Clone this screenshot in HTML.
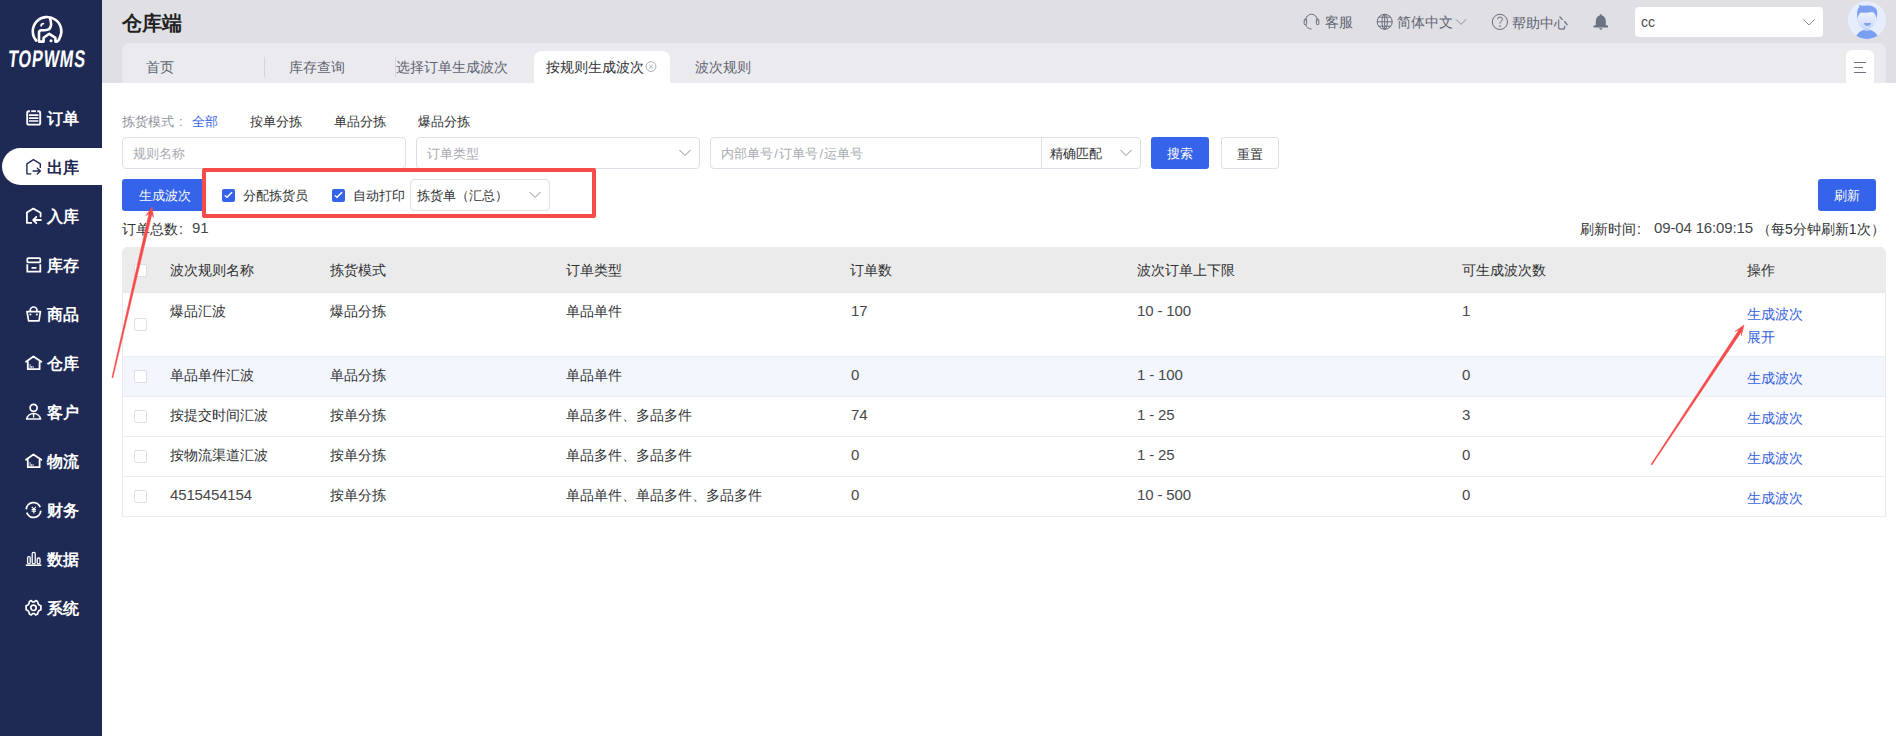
<!DOCTYPE html>
<html><head><meta charset="utf-8">
<style>
*{box-sizing:border-box;margin:0;padding:0}
html,body{width:1896px;height:736px;overflow:hidden;background:#fff;font-family:"Liberation Sans",sans-serif;color:#303133}
.a{position:absolute;white-space:nowrap}
#side{position:absolute;left:0;top:0;width:102px;height:736px;background:#1f2a54}
#hdr{position:absolute;left:102px;top:0;width:1794px;height:83px;background:#dfdfe4}
#tabs{position:absolute;left:122px;top:43px;width:1764px;height:40px;background:#ebeaef;border-radius:8px 8px 0 0}
.mi{position:absolute;left:0;width:102px;height:20px;color:#fff;font-size:16px;font-weight:bold;line-height:20px}
.mi svg{position:absolute;left:22px;top:-2px}
.mi span{position:absolute;left:47px;top:1px}
.t13{font-size:13px;line-height:20px}
.t14{font-size:14px;line-height:20px}
.inp{position:absolute;border:1px solid #dcdfe6;border-radius:4px;background:#fff;height:32px}
.ph{color:#a8abb2}
.btn{position:absolute;background:#3563e9;color:#fff;border-radius:3px;font-size:13px;text-align:center;line-height:34px;height:32px}
.chev{position:absolute}
.cb{position:absolute;width:13px;height:13px;border:1px solid #dcdfe6;border-radius:2px;background:#fff}
.row{position:absolute;left:123px;width:1762px;border-bottom:1px solid #ebeef5}
.num{font-size:15px;letter-spacing:-0.15px;color:#46474a}
.lnk{color:#3763e0}
</style></head><body>

<div id="side">
  <svg class="a" style="left:0;top:0" width="102" height="50" viewBox="0 0 102 50">
    <g fill="none" stroke="#fff" stroke-width="2.6" stroke-linecap="round" stroke-linejoin="round">
      <path d="M36.2 40.6 A14.3 14.3 0 1 1 59.6 38.2 Q58.6 41.4 56.6 41.6 L55.4 41.6 L55.4 37.8 L49.3 33.8 L43.6 37.8 L43.6 41.6 L39 41.6 L39 32.8 Q39 30.2 41.6 30.2 L44.6 30.2 Q51.1 30.2 51.1 24.2 Q51.1 20.4 49.8 17.8"/>
      <path d="M41.2 25.8 Q41.2 23.6 43.4 23.6" stroke-width="1.8"/>
    </g>
    <circle cx="51" cy="40.8" r="1.5" fill="#fff"/>
  </svg>
  <div class="a" style="left:7px;top:47px;font-size:24px;font-weight:bold;color:#fff;line-height:24px;letter-spacing:1.1px;transform:scaleX(0.68) skewX(-9deg);transform-origin:0 24px">TOPWMS</div>

  <div class="mi" style="top:108px"><svg width="24" height="24" viewBox="0 0 24 24"><rect x="5.2" y="5.2" width="13" height="13.4" rx="1.6" fill="none" stroke="currentColor" stroke-width="1.9"/><path d="M7.9 5.2 H15.2" stroke="#1f2a54" stroke-width="2.6"/><path d="M9.2 5.1 H13.9 M7 9.1 H16.4 M7 12.1 H16.4 M7 15 H16.4" stroke="currentColor" stroke-width="1.6"/></svg><span>订单</span></div>
  <div class="a" style="left:2px;top:148px;width:100px;height:37px;background:#fff;border-radius:18.5px 0 0 18.5px"></div>
  <div class="mi" style="top:157px;color:#1f2a54"><svg width="24" height="24" viewBox="0 0 24 24"><path d="M8.8 18.9 H4.9 V8.8 L11.4 4.6 L18.3 8.8 V12.4 M11.1 16 H18.4 M15.3 13.3 L18.4 16 L15.3 18.9" fill="none" stroke="currentColor" stroke-width="1.4" stroke-linecap="round" stroke-linejoin="round"/></svg><span>出库</span></div>
  <div class="mi" style="top:206px"><svg width="24" height="24" viewBox="0 0 24 24"><path d="M9.3 18.9 H4.9 V8.6 L11.4 4.6 L18.6 8.8 V12.5 M18.9 16 H11.3 M14.3 13 L11.2 16 L14.3 19.2" fill="none" stroke="currentColor" stroke-width="1.8" stroke-linecap="round" stroke-linejoin="round"/></svg><span>入库</span></div>
  <div class="mi" style="top:255px"><svg width="24" height="24" viewBox="0 0 24 24"><rect x="5.3" y="5.2" width="13" height="4.2" rx="1" fill="none" stroke="currentColor" stroke-width="1.8"/><path d="M5.3 11.2 V18.6 H18.3 V11.2 M9.5 14.9 H14.5" fill="none" stroke="currentColor" stroke-width="1.8"/></svg><span>库存</span></div>
  <div class="mi" style="top:304px"><svg width="24" height="24" viewBox="0 0 24 24"><path d="M5 9.6 H18.4 L17 18.8 H6.6 Z" fill="none" stroke="currentColor" stroke-width="1.7" stroke-linejoin="round"/><path d="M8.2 9.2 V8.4 A3.4 3.4 0 0 1 15 8.4 V9.2" fill="none" stroke="currentColor" stroke-width="1.7"/><circle cx="8.4" cy="12.6" r="1" fill="currentColor"/><circle cx="14.9" cy="12.6" r="1" fill="currentColor"/></svg><span>商品</span></div>
  <div class="mi" style="top:353px"><svg width="24" height="24" viewBox="0 0 24 24"><path d="M4 10.8 L11.4 5.4 L19.4 10.8 M5.8 11 V18.2 H17.6 V11" fill="none" stroke="currentColor" stroke-width="1.8" stroke-linejoin="round" stroke-linecap="round"/><path d="M8.1 13.2 V17.2 M9.6 15 V17.2 M11.1 15 V17.2" stroke="currentColor" stroke-width="0.8"/></svg><span>仓库</span></div>
  <div class="mi" style="top:402px"><svg width="24" height="24" viewBox="0 0 24 24"><circle cx="11.6" cy="7.8" r="3.5" fill="none" stroke="currentColor" stroke-width="1.7"/><path d="M4.7 19 A7 6.6 0 0 1 18.5 19 Z" fill="none" stroke="currentColor" stroke-width="1.7" stroke-linejoin="round"/><path d="M11.6 13.4 V17.6" stroke="currentColor" stroke-width="1.4"/></svg><span>客户</span></div>
  <div class="mi" style="top:451px"><svg width="24" height="24" viewBox="0 0 24 24"><path d="M4 10.8 L11.4 5.4 L19.4 10.8 M5.8 11 V18.2 H17.6 V11" fill="none" stroke="currentColor" stroke-width="1.8" stroke-linejoin="round" stroke-linecap="round"/><path d="M8.1 13.2 V17.2 M9.6 15 V17.2 M11.1 15 V17.2" stroke="currentColor" stroke-width="0.8"/></svg><span>物流</span></div>
  <div class="mi" style="top:500px"><svg width="24" height="24" viewBox="0 0 24 24"><path d="M4.3 11.4 A7.2 7.2 0 0 1 18.2 9.2 M18.8 12.6 A7.2 7.2 0 0 1 4.8 14.6" fill="none" stroke="currentColor" stroke-width="1.8"/><path d="M9.8 8.8 L11.8 11 L13.8 8.8 M9.6 11.6 H14 M9.6 13.2 H14 M11.8 11 V15.4" fill="none" stroke="currentColor" stroke-width="1.1"/></svg><span>财务</span></div>
  <div class="mi" style="top:549px"><svg width="24" height="24" viewBox="0 0 24 24"><rect x="5.6" y="9.6" width="2.6" height="7.2" rx="1.2" fill="none" stroke="currentColor" stroke-width="1.3"/><rect x="10.2" y="5.4" width="3" height="11.4" rx="1.3" fill="none" stroke="currentColor" stroke-width="1.3"/><rect x="15.2" y="11" width="2.8" height="5.8" rx="1.2" fill="none" stroke="currentColor" stroke-width="1.3"/><path d="M3.8 18.2 H19.4" stroke="currentColor" stroke-width="1.6"/></svg><span>数据</span></div>
  <div class="mi" style="top:598px"><svg width="24" height="24" viewBox="0 0 24 24"><path d="M9.3 4.6 L10.6 5.9 H12.4 L13.7 4.6 L15.6 5.6 L16 7.6 L17 9 L18.9 9.8 V13.8 L17 14.6 L16 16.1 L15.6 18 L13.7 19 L12.4 17.7 H10.6 L9.3 19 L7.4 18 L7 16.1 L6 14.6 L4.1 13.8 V9.8 L6 9 L7 7.6 L7.4 5.6 Z" fill="none" stroke="currentColor" stroke-width="1.7" stroke-linejoin="round"/><circle cx="11.5" cy="11.8" r="2.7" fill="none" stroke="currentColor" stroke-width="1.7"/></svg><span>系统</span></div>
</div>

<div id="hdr"></div>
<div class="a" style="left:122px;top:10px;font-size:20px;font-weight:bold;line-height:26px;color:#222">仓库端</div>

<!-- header right -->
<svg class="a" style="left:1298px;top:8px" width="320" height="28" viewBox="1298 8 320 28">
  <g fill="none" stroke="#686e7c" stroke-width="1">
    <path d="M1305.6 20.5 A5.9 6.3 0 0 1 1317.4 20.5"/>
    <rect x="1304.2" y="19.2" width="2.4" height="5.4" rx="0.8"/>
    <rect x="1316.4" y="19.2" width="2.4" height="5.4" rx="0.8"/>
    <path d="M1305.8 24.6 Q1306.6 28.6 1311.6 29"/>
    <circle cx="1384.7" cy="21.8" r="7.5"/>
    <ellipse cx="1384.7" cy="21.8" rx="2.7" ry="7.5"/>
    <path d="M1384.7 14.3 V29.3 M1378.4 17.2 H1391 M1377.2 21.8 H1392.2 M1378.4 26.2 H1391"/>
    <path d="M1456 19.4 L1461 24.4 L1466 19.4" stroke="#8a8f9a"/>
    <circle cx="1499.9" cy="21.9" r="7.6"/>
    <path d="M1497.6 19.4 Q1497.6 17 1500 17 Q1502.4 17 1502.4 19.2 Q1502.4 20.6 1500.8 21.4 Q1500 21.9 1500 23.6"/>
  </g>
  <circle cx="1500" cy="26.1" r="0.8" fill="#5f6573"/>
  <path d="M1600.8 14.2 Q1601.8 14.2 1602 15.6 Q1605.6 16.8 1605.8 21 L1605.8 25.2 L1608 25.6 L1608 27.4 L1593.6 27.4 L1593.6 25.6 L1595.8 25.2 L1595.8 21 Q1596 16.8 1599.6 15.6 Q1599.8 14.2 1600.8 14.2 Z M1598.6 28.2 H1603 L1600.8 30 Z" fill="#6b7282"/>
</svg>
<div class="a t14" style="left:1325px;top:12px;color:#5f6573">客服</div>
<div class="a t14" style="left:1397px;top:12px;color:#5f6573">简体中文</div>
<div class="a t14" style="left:1512px;top:13px;color:#5f6573">帮助中心</div>
<div class="a" style="left:1635px;top:7px;width:188px;height:30px;background:#fff;border-radius:4px"></div>
<div class="a t14" style="left:1641px;top:12px;color:#4a4a4a">cc</div>
<svg class="a" style="left:1800px;top:15px" width="18" height="14" viewBox="1800 15 18 14"><path d="M1803.5 19.5 L1809 25 L1814.6 19.5" fill="none" stroke="#8a8f9a" stroke-width="1"/></svg>
<svg class="a" style="left:1846px;top:0" width="42" height="40" viewBox="1846 0 42 40">
  <defs><clipPath id="avc"><circle cx="1866.9" cy="20" r="19"/></clipPath>
  <linearGradient id="face" x1="0" y1="0" x2="0" y2="1"><stop offset="0" stop-color="#f3f6fe"/><stop offset="1" stop-color="#c9d7fa"/></linearGradient></defs>
  <circle cx="1866.9" cy="20" r="19" fill="#e6edfc"/>
  <g clip-path="url(#avc)">
    <path d="M1855.5 39 Q1857 30 1866.9 29.5 Q1876.8 30 1878.5 39 Z" fill="#77a0f2"/>
    <rect x="1864.6" y="26" width="4.6" height="5" fill="#b3c8f8"/>
    <ellipse cx="1866.6" cy="19.6" rx="9" ry="9.8" fill="url(#face)"/>
    <path d="M1857.4 19 Q1856 10 1859.6 6.4 L1858.6 4.8 Q1863 6.4 1866 5.6 Q1874 4.6 1876.8 10 Q1878 14 1876.4 19 Q1875.6 12.4 1872 12 Q1866 13.4 1861.2 12.4 Q1858.4 13 1857.4 19 Z" fill="#7ea1f2"/>
    <path d="M1864 22.9 H1871 Q1870.6 25.8 1867.5 25.8 Q1864.4 25.8 1864 22.9 Z" fill="#7ea1f2"/><circle cx="1857.4" cy="19.6" r="1.4" fill="#dbe5fb"/><circle cx="1876.6" cy="19.6" r="1.4" fill="#dbe5fb"/>
  </g>
</svg>
<div id="tabs"></div>
<div class="a t14" style="left:146px;top:57px;color:#5f6470">首页</div>
<div class="a" style="left:264px;top:57px;width:1px;height:20px;background:#d5d5dc"></div>
<div class="a t14" style="left:289px;top:57px;color:#5f6470">库存查询</div>
<div class="a" style="left:395px;top:57px;width:1px;height:20px;background:#d5d5dc"></div>
<div class="a t14" style="left:396px;top:57px;color:#5f6470">选择订单生成波次</div>
<div class="a" style="left:534px;top:51px;width:136px;height:32px;background:#fff;border-radius:8px 8px 0 0"></div>
<div class="a t14" style="left:546px;top:57px;color:#303133">按规则生成波次</div>
<svg class="a" style="left:644px;top:59px" width="14" height="14" viewBox="644 59 14 14"><g fill="none" stroke="#a3a7b3" stroke-width="0.9"><circle cx="651" cy="66.6" r="4.9"/><path d="M649.2 64.8 L652.8 68.4 M652.8 64.8 L649.2 68.4"/></g></svg>
<div class="a t14" style="left:695px;top:57px;color:#5f6470">波次规则</div>
<div class="a" style="left:1846px;top:50px;width:28px;height:33px;background:#fff;border-radius:6px 6px 0 0"></div>
<div class="a" style="left:1854px;top:62px;width:12px;height:1px;background:#6b7282"></div>
<div class="a" style="left:1854px;top:67px;width:9px;height:1px;background:#6b7282"></div>
<div class="a" style="left:1854px;top:72px;width:12px;height:1px;background:#6b7282"></div>

<!-- filters -->
<div class="a t13" style="left:122px;top:112px;color:#909399">拣货模式</div><div class="a t13" style="left:179px;top:112px;color:#909399">:</div>
<div class="a t13" style="left:192px;top:112px;color:#3563e9">全部</div>
<div class="a t13" style="left:250px;top:112px">按单分拣</div>
<div class="a t13" style="left:334px;top:112px">单品分拣</div>
<div class="a t13" style="left:418px;top:112px">爆品分拣</div>

<div class="inp" style="left:122px;top:137px;width:284px"></div>
<div class="a t13 ph" style="left:133px;top:144px">规则名称</div>
<div class="inp" style="left:416px;top:137px;width:284px"></div>
<div class="a t13 ph" style="left:427px;top:144px">订单类型</div>
<div class="inp" style="left:710px;top:137px;width:431px"></div>
<div class="a" style="left:1041px;top:138px;width:1px;height:30px;background:#dcdfe6"></div>
<div class="a t13 ph" style="left:721px;top:144px">内部单号<span style="margin:0 1.3px">/</span>订单号<span style="margin:0 1.3px">/</span>运单号</div>
<div class="a t13" style="left:1050px;top:144px">精确匹配</div>
<div class="btn" style="left:1151px;top:137px;width:58px">搜索</div>
<div class="inp" style="left:1221px;top:137px;width:58px;border-radius:3px"></div>
<div class="a t13" style="left:1237px;top:145px">重置</div>

<div class="btn" style="left:122px;top:179px;width:84px;padding-left:1px">生成波次</div>
<div class="a" style="left:202px;top:168px;width:394px;height:50px;border:4px solid #f64b4b;border-radius:2px"></div>
<div class="a" style="left:222px;top:189px;width:13px;height:13px;background:#3563e9;border-radius:2px"></div>
<div class="a t13" style="left:243px;top:186px">分配拣货员</div>
<div class="a" style="left:332px;top:189px;width:13px;height:13px;background:#3563e9;border-radius:2px"></div>
<div class="a t13" style="left:353px;top:186px">自动打印</div>
<div class="inp" style="left:410px;top:179px;width:140px"></div>
<div class="a t13" style="left:417px;top:186px">拣货单（汇总）</div>

<svg class="a" style="left:678px;top:148px" width="14" height="10" viewBox="0 0 14 10"><path d="M1.5 2 L7 7.5 L12.5 2" fill="none" stroke="#8a8f9a" stroke-width="1"/></svg>
<svg class="a" style="left:1119px;top:148px" width="14" height="10" viewBox="0 0 14 10"><path d="M1.5 2 L7 7.5 L12.5 2" fill="none" stroke="#8a8f9a" stroke-width="1"/></svg>
<svg class="a" style="left:528px;top:190px" width="14" height="10" viewBox="0 0 14 10"><path d="M1.5 2 L7 7.5 L12.5 2" fill="none" stroke="#8a8f9a" stroke-width="1"/></svg>
<svg class="a" style="left:222px;top:189px" width="13" height="13" viewBox="0 0 13 13"><path d="M3.2 6.8 L5 8.2 L9.8 3.4" fill="none" stroke="#fff" stroke-width="1.4" stroke-linecap="round"/></svg>
<svg class="a" style="left:332px;top:189px" width="13" height="13" viewBox="0 0 13 13"><path d="M3.2 6.8 L5 8.2 L9.8 3.4" fill="none" stroke="#fff" stroke-width="1.4" stroke-linecap="round"/></svg>
<div class="btn" style="left:1818px;top:179px;width:58px">刷新</div>
<div class="a t14" style="left:122px;top:219px">订单总数</div><div class="a t14" style="left:179px;top:219px">:</div><div class="a t13 num" style="left:192px;top:218px">91</div>
<div class="a t14" style="left:1580px;top:219px">刷新时间</div><div class="a t14" style="left:1637px;top:219px">:</div><div class="a t13 num" style="left:1654px;top:218px">09-04 16:09:15</div><div class="a t14" style="left:1757px;top:219px">（每5分钟刷新1次）</div>

<!-- table -->
<div class="a" style="left:122px;top:247px;width:1764px;height:270px;border:1px solid #e8eaf0;border-radius:5px 5px 0 0;background:#fff"></div>
<div class="a" style="left:123px;top:248px;width:1762px;height:45px;background:#ebebeb;border-radius:4px 4px 0 0;border-bottom:1px solid #e6e8ef"></div>
<div class="a" style="left:123px;top:356px;width:1762px;height:40px;background:#f3f7fd"></div>
<div class="a" style="left:123px;top:356px;width:1762px;height:1px;background:#ebeef5"></div>
<div class="a" style="left:123px;top:396px;width:1762px;height:1px;background:#ebeef5"></div>
<div class="a" style="left:123px;top:436px;width:1762px;height:1px;background:#ebeef5"></div>
<div class="a" style="left:123px;top:476px;width:1762px;height:1px;background:#ebeef5"></div>
<div class="a" style="left:123px;top:516px;width:1762px;height:1px;background:#ebeef5"></div>

<div class="a t14" style="left:170px;top:260px">波次规则名称</div>
<div class="a t14" style="left:330px;top:260px">拣货模式</div>
<div class="a t14" style="left:566px;top:260px">订单类型</div>
<div class="a t14" style="left:850px;top:260px">订单数</div>
<div class="a t14" style="left:1137px;top:260px">波次订单上下限</div>
<div class="a t14" style="left:1462px;top:260px">可生成波次数</div>
<div class="a t14" style="left:1747px;top:260px">操作</div>

<div class="cb" style="left:134px;top:264px"></div>
<div class="cb" style="left:134px;top:318px"></div>
<div class="cb" style="left:134px;top:370px"></div>
<div class="cb" style="left:134px;top:410px"></div>
<div class="cb" style="left:134px;top:450px"></div>
<div class="cb" style="left:134px;top:490px"></div>

<div class="a t14" style="left:170px;top:301px">爆品汇波</div>
<div class="a t14" style="left:330px;top:301px">爆品分拣</div>
<div class="a t14" style="left:566px;top:301px">单品单件</div>
<div class="a t14 num" style="left:851px;top:301px">17</div>
<div class="a t14 num" style="left:1137px;top:301px">10 - 100</div>
<div class="a t14 num" style="left:1462px;top:301px">1</div>
<div class="a t14 lnk" style="left:1747px;top:304px">生成波次</div>
<div class="a t14 lnk" style="left:1747px;top:327px">展开</div>

<div class="a t14" style="left:170px;top:365px">单品单件汇波</div>
<div class="a t14" style="left:330px;top:365px">单品分拣</div>
<div class="a t14" style="left:566px;top:365px">单品单件</div>
<div class="a t14 num" style="left:851px;top:365px">0</div>
<div class="a t14 num" style="left:1137px;top:365px">1 - 100</div>
<div class="a t14 num" style="left:1462px;top:365px">0</div>
<div class="a t14 lnk" style="left:1747px;top:368px">生成波次</div>

<div class="a t14" style="left:170px;top:405px">按提交时间汇波</div>
<div class="a t14" style="left:330px;top:405px">按单分拣</div>
<div class="a t14" style="left:566px;top:405px">单品多件、多品多件</div>
<div class="a t14 num" style="left:851px;top:405px">74</div>
<div class="a t14 num" style="left:1137px;top:405px">1 - 25</div>
<div class="a t14 num" style="left:1462px;top:405px">3</div>
<div class="a t14 lnk" style="left:1747px;top:408px">生成波次</div>

<div class="a t14" style="left:170px;top:445px">按物流渠道汇波</div>
<div class="a t14" style="left:330px;top:445px">按单分拣</div>
<div class="a t14" style="left:566px;top:445px">单品多件、多品多件</div>
<div class="a t14 num" style="left:851px;top:445px">0</div>
<div class="a t14 num" style="left:1137px;top:445px">1 - 25</div>
<div class="a t14 num" style="left:1462px;top:445px">0</div>
<div class="a t14 lnk" style="left:1747px;top:448px">生成波次</div>

<div class="a t14 num" style="left:170px;top:485px">4515454154</div>
<div class="a t14" style="left:330px;top:485px">按单分拣</div>
<div class="a t14" style="left:566px;top:485px">单品单件、单品多件、多品多件</div>
<div class="a t14 num" style="left:851px;top:485px">0</div>
<div class="a t14 num" style="left:1137px;top:485px">10 - 500</div>
<div class="a t14 num" style="left:1462px;top:485px">0</div>
<div class="a t14 lnk" style="left:1747px;top:488px">生成波次</div>

<!-- arrows -->
<svg class="a" style="left:0;top:0" width="1896" height="736">
  <polygon points="112.9,377.8 151.9,214.2 153.6,217.7 152.0,207.0 145.8,215.7 149.0,213.5 111.9,377.6" fill="#f64b4b" stroke="#f64b4b" stroke-width="0.5" stroke-linejoin="round"/>
  <polygon points="1651.9,464.9 1741.4,331.7 1741.4,335.8 1744.0,325.0 1735.2,331.4 1738.9,330.0 1651.1,464.3" fill="#f64b4b" stroke="#f64b4b" stroke-width="0.5" stroke-linejoin="round"/>
</svg>
</body></html>
